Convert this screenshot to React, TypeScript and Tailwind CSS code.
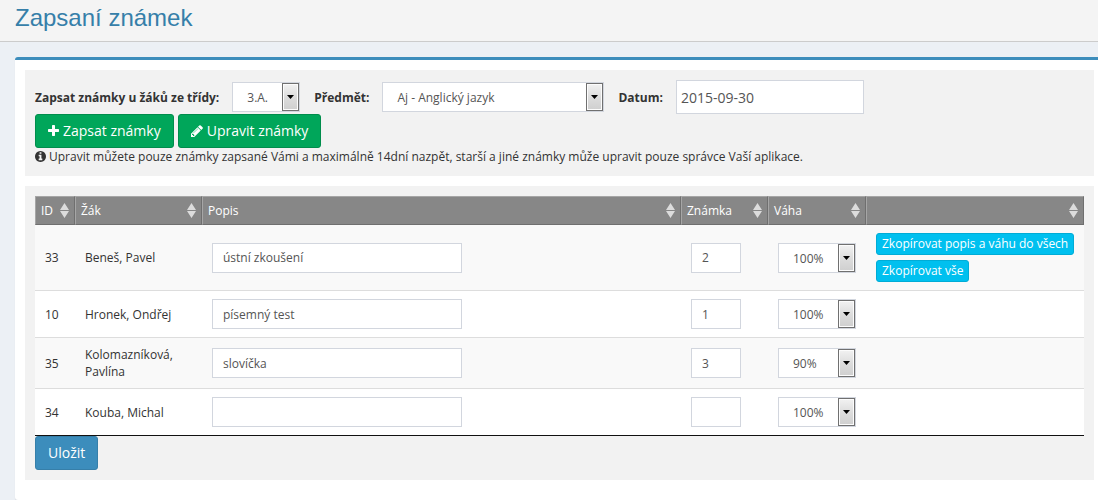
import type { ReactNode } from "react";

type Student = { id: number; name: string; note: string; mark: string; weight: string };

const students: Student[] = [
  { id: 33, name: "Beneš, Pavel", note: "ústní zkoušení", mark: "2", weight: "100%" },
  { id: 10, name: "Hronek, Ondřej", note: "písemný test", mark: "1", weight: "100%" },
  { id: 35, name: "Kolomazníková, Pavlína", note: "slovíčka", mark: "3", weight: "90%" },
  { id: 34, name: "Kouba, Michal", note: "", mark: "", weight: "100%" },
];

const columns = [
  { title: "ID", width: "w-10" },
  { title: "Žák", width: "w-[127px]" },
  { title: "Popis", width: "w-auto" },
  { title: "Známka", width: "w-[87px]" },
  { title: "Váha", width: "w-[98px]" },
  { title: "", width: "w-[218px]" },
];

function PlusIcon() {
  return (
    <svg viewBox="192 128 1408 1536" className="h-3 w-[11px]" fill="currentColor" aria-hidden="true">
      <path d="M1600 736v192q0 40-28 68t-68 28h-416v416q0 40-28 68t-68 28h-192q-40 0-68-28t-28-68v-416h-416q-40 0-68-28t-28-68v-192q0-40 28-68t68-28h416v-416q0-40 28-68t68-28h192q40 0 68 28t28 68v416h416q40 0 68 28t28 68z" />
    </svg>
  );
}

function PencilIcon() {
  return (
    <svg viewBox="128 128 1536 1536" className="size-3" fill="currentColor" aria-hidden="true">
      <path d="M491 1536l91-91-235-235-91 91v107h128v128h107zm523-928q0-22-22-22-10 0-17 7l-542 542q-7 7-7 17 0 22 22 22 10 0 17-7l542-542q7-7 7-17zm-54-192l416 416-832 832h-416v-416zm683 96q0 53-37 90l-166 166-416-416 166-165q36-38 90-38 53 0 91 38l235 234q37 39 37 91z" />
    </svg>
  );
}

function InfoIcon() {
  return (
    <svg viewBox="128 128 1536 1536" className="size-[11px] shrink-0" fill="currentColor" aria-hidden="true">
      <path d="M1152 1376v-160q0-14-9-23t-23-9h-96v-512q0-14-9-23t-23-9h-320q-14 0-23 9t-9 23v160q0 14 9 23t23 9h96v320h-96q-14 0-23 9t-9 23v160q0 14 9 23t23 9h448q14 0 23-9t9-23zm-128-896v-160q0-14-9-23t-23-9h-192q-14 0-23 9t-9 23v160q0 14 9 23t23 9h192q14 0 23-9t9-23zm640 416q0 209-103 385.5t-279.5 279.5-385.5 103-385.5-103-279.5-279.5-103-385.5 103-385.5 279.5-279.5 385.5-103 385.5 103 279.5 279.5 103 385.5z" />
    </svg>
  );
}

function SortIcon() {
  return (
    <svg viewBox="0 0 9 15" className="h-[15px] w-[9px] shrink-0" fill="#dcdcdc" aria-hidden="true">
      <path d="M4.5 0L9 7H0zM0 8h9l-4.500 7z" />
    </svg>
  );
}

type SelectProps = { id?: string; label?: string; value: string; options: string[]; width: string };

function Select({ id, label, value, options, width }: SelectProps) {
  return (
    <div className={`relative h-[30px] ${width}`}>
      <select
        id={id}
        aria-label={label}
        defaultValue={value}
        className="block h-full w-full appearance-none border border-[#d2d6de] bg-white pt-0.5 pr-5 pl-[14px] text-xs text-[#555]"
      >
        {options.map((o) => (
          <option key={o}>{o}</option>
        ))}
      </select>
      <span className="pointer-events-none absolute inset-y-px right-px flex w-[17px] items-center justify-center border border-[#707070] bg-linear-to-b from-[#f2f2f2] from-0% via-[#dddddd] via-50% to-[#cfcfcf] shadow-[inset_0_0_0_1px_#fcfcfc]">
        <svg viewBox="0 0 7 4" className="h-1 w-[7px]" aria-hidden="true">
          <path d="M0 0h7L3.500 4z" fill="#000" />
        </svg>
      </span>
    </div>
  );
}

function GreenButton({ icon, children }: { icon: ReactNode; children: ReactNode }) {
  return (
    <button
      type="button"
      className="flex h-[34px] items-center gap-1 rounded-[3px] border border-[#008d4c] bg-[#00a65a] px-3 text-sm text-white"
    >
      {icon}
      {children}
    </button>
  );
}

function CopyButton({ children }: { children: ReactNode }) {
  return (
    <button
      type="button"
      className="h-[22px] rounded-[3px] border border-[#00acd6] bg-[#00c0ef] px-[5px] text-xs leading-5 whitespace-nowrap text-white"
    >
      {children}
    </button>
  );
}

const textInput = "block h-[30px] max-w-full border border-[#d2d6de] bg-white px-[10px] text-xs text-[#555]";
const weights = ["100%", "90%", "80%", "70%", "60%", "50%"];

export default function App() {
  return (
    <div className="min-h-screen bg-[#ecf0f5] font-['Open_Sans',sans-serif] text-xs leading-[17px] text-[#333]">
      <header className="border-b border-[#ccc] bg-[#f4f4f4] px-[15px] pt-1 pb-[9px]">
        <h1 className="font-['Liberation_Sans',Arial,sans-serif] text-2xl leading-7 text-[#367fa9]">Zapsaní známek</h1>
      </header>

      <main className="pt-[15px] pl-[15px]">
        <div className="flex flex-col gap-[10px] rounded-l-[3px] border-t-[3px] border-[#3c8dbc] bg-white pt-[10px] pr-1 pb-5 pl-[10px] shadow-[0_1px_1px_rgba(0,0,0,0.1)]">
          <section className="bg-[#f2f2f2] p-[10px]">
            <div className="flex flex-wrap items-center">
              <label htmlFor="class" className="mr-[13px] font-bold">
                Zapsat známky u žáků ze třídy:
              </label>
              <Select id="class" value="3.A." options={["3.A.", "3.B."]} width="w-[68px]" />
              <label htmlFor="subject" className="mr-[13px] ml-[14px] font-bold">
                Předmět:
              </label>
              <Select
                id="subject"
                value="Aj - Anglický jazyk"
                options={["Aj - Anglický jazyk"]}
                width="w-[222px]"
              />
              <label htmlFor="date" className="mr-[13px] ml-[14px] font-bold">
                Datum:
              </label>
              <input
                id="date"
                type="text"
                defaultValue="2015-09-30"
                className="h-[34px] w-[188px] border border-[#d2d6de] bg-white px-1 text-sm text-[#555]"
              />
            </div>
            <div className="flex gap-1">
              <GreenButton icon={<PlusIcon />}>Zapsat známky</GreenButton>
              <GreenButton icon={<PencilIcon />}>Upravit známky</GreenButton>
            </div>
            <p className="flex items-center gap-[3px] pb-px">
              <InfoIcon />
              <span>
                Upravit můžete pouze známky zapsané Vámi a maximálně 14dní nazpět, starší a jiné známky může upravit
                pouze správce Vaší aplikace.
              </span>
            </p>
          </section>

          <section className="bg-[#f2f2f2] p-[10px]">
            <table className="w-full table-fixed border-separate border-spacing-0 border-b border-[#111] bg-white">
              <thead>
                <tr>
                  {columns.map((c) => (
                    <th
                      key={c.title}
                      scope="col"
                      className={`h-[29px] border border-t-[#a6a6a6] border-r-[#6f6f6f] border-b-[#6f6f6f] border-l-[#a6a6a6] bg-[#878787] px-[5px] text-left font-normal text-white ${c.width}`}
                    >
                      <div className="flex items-center justify-between">
                        <span>{c.title}</span>
                        <SortIcon />
                      </div>
                    </th>
                  ))}
                </tr>
              </thead>
              <tbody className="[&_td]:border-t [&_td]:border-[#ddd] [&_td]:px-[10px] [&_td]:py-2 [&_tr:first-child_td]:border-t-0 [&_tr:nth-child(odd)]:bg-[#f9f9f9]">
                {students.map((s, i) => (
                  <tr key={s.id}>
                    <td>{s.id}</td>
                    <td>{s.name}</td>
                    <td>
                      <input
                        type="text"
                        aria-label={`Popis: ${s.name}`}
                        defaultValue={s.note}
                        className={`${textInput} w-[250px]`}
                      />
                    </td>
                    <td>
                      <input
                        type="text"
                        aria-label={`Známka: ${s.name}`}
                        defaultValue={s.mark}
                        className={`${textInput} w-[50px]`}
                      />
                    </td>
                    <td>
                      <Select label={`Váha: ${s.name}`} value={s.weight} options={weights} width="w-[78px]" />
                    </td>
                    <td>
                      {i === 0 && (
                        <div className="flex flex-col items-start gap-[5px]">
                          <CopyButton>Zkopírovat popis a váhu do všech</CopyButton>
                          <CopyButton>Zkopírovat vše</CopyButton>
                        </div>
                      )}
                    </td>
                  </tr>
                ))}
              </tbody>
            </table>
            <button
              type="submit"
              className="block h-[34px] rounded-[3px] border border-[#367fa9] bg-[#3c8dbc] px-3 text-sm text-white"
            >
              Uložit
            </button>
          </section>
        </div>
      </main>
    </div>
  );
}
